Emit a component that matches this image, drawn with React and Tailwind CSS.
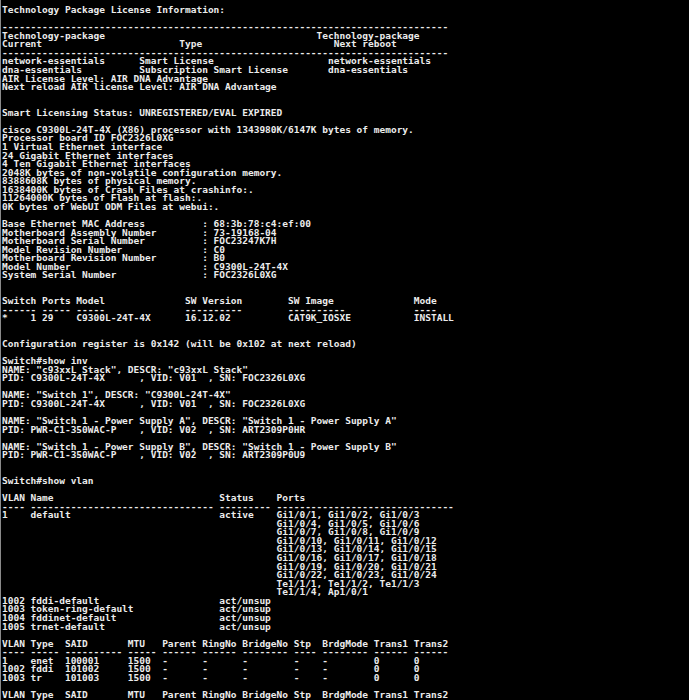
// Console capture: show license / show version / show inv / show vlan

// place each [col, text] pair at its fixed column
function row(cells) {
  let line = ''
  for (const [col, text] of cells) line = line.padEnd(col) + text
  return line
}

const dashes = (n) => '-'.repeat(n)

const ports = [
  'Gi1/0/4, Gi1/0/5, Gi1/0/6',
  'Gi1/0/7, Gi1/0/8, Gi1/0/9',
  'Gi1/0/10, Gi1/0/11, Gi1/0/12',
  'Gi1/0/13, Gi1/0/14, Gi1/0/15',
  'Gi1/0/16, Gi1/0/17, Gi1/0/18',
  'Gi1/0/19, Gi1/0/20, Gi1/0/21',
  'Gi1/0/22, Gi1/0/23, Gi1/0/24',
  'Te1/1/1, Te1/1/2, Te1/1/3',
  'Te1/1/4, Ap1/0/1'
]

const inventory = [
  ['Base Ethernet MAC Address', '68:3b:78:c4:ef:00'],
  ['Motherboard Assembly Number', '73-19168-04'],
  ['Motherboard Serial Number', 'FOC23247K7H'],
  ['Model Revision Number', 'C0'],
  ['Motherboard Revision Number', 'B0'],
  ['Model Number', 'C9300L-24T-4X'],
  ['System Serial Number', 'FOC2326L0XG']
]

const vlanTypeHeader = row([
  [0, 'VLAN'], [5, 'Type'], [11, 'SAID'], [22, 'MTU'], [28, 'Parent'], [35, 'RingNo'],
  [42, 'BridgeNo'], [51, 'Stp'], [56, 'BrdgMode'], [65, 'Trans1'], [72, 'Trans2']
])

const vlanTypeRow = (id, type, said) =>
  row([
    [0, id], [5, type], [11, said], [22, '1500'], [28, '-'], [35, '-'],
    [42, '-'], [51, '-'], [56, '-'], [65, '0'], [72, '0']
  ])

const lines = [
  'Technology Package License Information:',
  '',
  dashes(78),
  row([[0, 'Technology-package'], [55, 'Technology-package']]),
  row([[0, 'Current'], [31, 'Type'], [58, 'Next reboot']]),
  dashes(78),
  row([[0, 'network-essentials'], [24, 'Smart License'], [57, 'network-essentials']]),
  row([[0, 'dna-essentials'], [24, 'Subscription Smart License'], [57, 'dna-essentials']]),
  'AIR License Level: AIR DNA Advantage',
  'Next reload AIR license Level: AIR DNA Advantage',
  '',
  '',
  'Smart Licensing Status: UNREGISTERED/EVAL EXPIRED',
  '',
  'cisco C9300L-24T-4X (X86) processor with 1343980K/6147K bytes of memory.',
  'Processor board ID FOC2326L0XG',
  '1 Virtual Ethernet interface',
  '24 Gigabit Ethernet interfaces',
  '4 Ten Gigabit Ethernet interfaces',
  '2048K bytes of non-volatile configuration memory.',
  '8388608K bytes of physical memory.',
  '1638400K bytes of Crash Files at crashinfo:.',
  '11264000K bytes of Flash at flash:.',
  '0K bytes of WebUI ODM Files at webui:.',
  '',
  ...inventory.map(([k, v]) => row([[0, k], [35, ': ' + v]])),
  '',
  '',
  row([[0, 'Switch Ports Model'], [32, 'SW Version'], [50, 'SW Image'], [72, 'Mode']]),
  row([[0, '------ ----- -----'], [32, dashes(10)], [50, dashes(10)], [72, dashes(4)]]),
  row([[0, '*    1 29    C9300L-24T-4X'], [32, '16.12.02'], [50, 'CAT9K_IOSXE'], [72, 'INSTALL']]),
  '',
  '',
  'Configuration register is 0x142 (will be 0x102 at next reload)',
  '',
  'Switch#show inv',
  'NAME: "c93xxL Stack", DESCR: "c93xxL Stack"',
  'PID: C9300L-24T-4X      , VID: V01  , SN: FOC2326L0XG',
  '',
  'NAME: "Switch 1", DESCR: "C9300L-24T-4X"',
  'PID: C9300L-24T-4X      , VID: V01  , SN: FOC2326L0XG',
  '',
  'NAME: "Switch 1 - Power Supply A", DESCR: "Switch 1 - Power Supply A"',
  'PID: PWR-C1-350WAC-P    , VID: V02  , SN: ART2309P0HR',
  '',
  'NAME: "Switch 1 - Power Supply B", DESCR: "Switch 1 - Power Supply B"',
  'PID: PWR-C1-350WAC-P    , VID: V02  , SN: ART2309P0U9',
  '',
  '',
  'Switch#show vlan',
  '',
  row([[0, 'VLAN Name'], [38, 'Status'], [48, 'Ports']]),
  row([[0, dashes(4)], [5, dashes(32)], [38, dashes(9)], [48, dashes(31)]]),
  row([[0, '1    default'], [38, 'active'], [48, 'Gi1/0/1, Gi1/0/2, Gi1/0/3']]),
  ...ports.map((p) => row([[48, p]])),
  row([[0, '1002 fddi-default'], [38, 'act/unsup']]),
  row([[0, '1003 token-ring-default'], [38, 'act/unsup']]),
  row([[0, '1004 fddinet-default'], [38, 'act/unsup']]),
  row([[0, '1005 trnet-default'], [38, 'act/unsup']]),
  '',
  vlanTypeHeader,
  '---- ----- ---------- ----- ------ ------ -------- ---- -------- ------ ------',
  vlanTypeRow('1', 'enet', '100001'),
  vlanTypeRow('1002', 'fddi', '101002'),
  vlanTypeRow('1003', 'tr', '101003'),
  '',
  vlanTypeHeader
]

export default function App() {
  return (
    <div className="w-full h-[700px] min-h-screen bg-black overflow-hidden">
      <div className="h-full border-l border-[#8a8a8a] pl-[1px] pt-[6px]">
        <pre className="m-0 font-['DejaVu_Sans_Mono',monospace] font-bold text-[9.5px] leading-[8.5625px] text-[#ececec] whitespace-pre">
          {lines.join('\n')}
        </pre>
      </div>
    </div>
  )
}
